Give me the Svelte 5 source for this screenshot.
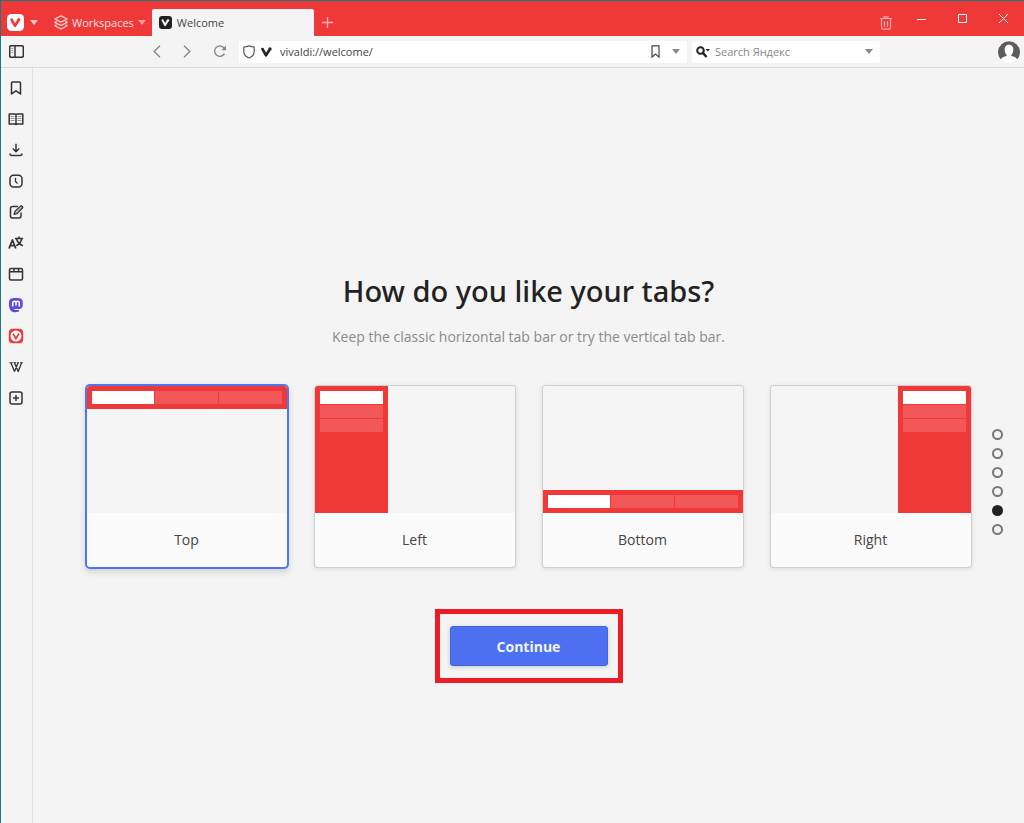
<script>
  let layouts = [
    { name: 'Top', side: 'top' },
    { name: 'Left', side: 'left' },
    { name: 'Bottom', side: 'bottom' },
    { name: 'Right', side: 'right' }
  ];

  let panels = ['Bookmarks', 'Reading List', 'Downloads', 'History', 'Notes', 'Translate', 'Window', 'Mastodon', 'Vivaldi', 'Wikipedia', 'Add Web Panel'];

  let steps = [1, 2, 3, 4, 5, 6];

  let selected = 'top';
  let current = 5;
  let address = 'vivaldi://welcome/';
  let search = '';
</script>

<div class="window">
  <header class="tabbar">
    <button class="menu" aria-label="Vivaldi menu">
      <svg width="17" height="17" viewBox="0 0 17 17">
        <rect width="17" height="17" rx="4.5" fill="#fff" />
        <path d="M4.6 5.6 8 11.9 11 7" fill="none" stroke="#ef3939" stroke-width="2.6" stroke-linecap="round" stroke-linejoin="round" />
        <circle cx="11.8" cy="5.7" r="1.6" fill="#ef3939" />
      </svg>
      <svg width="8" height="5" viewBox="0 0 8 5"><path d="M0 0h8L4 5z" fill="#fbc4c4" /></svg>
    </button>
    <button class="workspaces">
      <svg width="14" height="15" viewBox="0 0 14 15" fill="none" stroke="#fbd0d0" stroke-width="1.3" stroke-linejoin="round">
        <path d="M7 .8 13.2 4 7 7.2.8 4z" />
        <path d="M2.6 6.3.8 7.3 7 10.5l6.2-3.2-1.8-1" />
        <path d="M2.6 9.7.8 10.7 7 14l6.2-3.3-1.8-1" />
      </svg>
      <span>Workspaces</span>
      <svg width="8" height="5" viewBox="0 0 8 5"><path d="M0 0h8L4 5z" fill="#f69a9a" /></svg>
    </button>
    <button class="tab">
      <svg width="13" height="13" viewBox="0 0 17 17">
        <rect width="17" height="17" rx="4" fill="#222" />
        <path d="M4.6 5.6 8 11.9 11 7" fill="none" stroke="#fff" stroke-width="2.6" stroke-linecap="round" stroke-linejoin="round" />
        <circle cx="11.8" cy="5.7" r="1.6" fill="#fff" />
      </svg>
      <span>Welcome</span>
    </button>
    <button class="new-tab" aria-label="New tab">
      <svg width="11" height="11" viewBox="0 0 11 11" stroke="#fbb0b0" stroke-width="1.3"><path d="M5.5 0v11M0 5.5h11" /></svg>
    </button>
    <div class="controls">
      <button class="trash" aria-label="Closed tabs">
        <svg width="12" height="14" viewBox="0 0 12 14" fill="none" stroke="#f9a8a8" stroke-width="1.2">
          <path d="M0 2.5h12M4 2.3V.8h4v1.5M1.5 2.5v9q0 1.7 1.7 1.7h5.6q1.7 0 1.7-1.7v-9M4.5 5v6M7.500 5v6" />
        </svg>
      </button>
      <button aria-label="Minimize">
        <svg width="11" height="11" viewBox="0 0 11 11" stroke="#fff"><path d="M1 6.5h9" /></svg>
      </button>
      <button aria-label="Maximize">
        <svg width="11" height="11" viewBox="0 0 11 11" fill="none" stroke="#fff"><path d="M1.500 1.500h8v8h-8z" /></svg>
      </button>
      <button aria-label="Close">
        <svg width="11" height="11" viewBox="0 0 11 11" stroke="#fff"><path d="m1 1 9 9m0-9-9 9" /></svg>
      </button>
    </div>
  </header>

  <div class="toolbar">
    <button class="toggle" aria-label="Toggle panel">
      <svg width="15" height="13" viewBox="0 0 15 13" fill="none" stroke="#333" stroke-width="1.5">
        <rect x=".7" y=".7" width="13.6" height="11.6" rx="1.5" />
        <path d="M6 1v11" />
        <path d="M2.3 3.5h2M2.3 5.5h2M2.3 7.5h2" stroke="#999" stroke-width="1" />
      </svg>
    </button>
    <nav class="history">
      <button aria-label="Back">
        <svg width="8" height="13" viewBox="0 0 8 13" fill="none" stroke="#888" stroke-width="1.4"><path d="M7 .7 1.2 6.5 7 12.3" /></svg>
      </button>
      <button aria-label="Forward">
        <svg width="8" height="13" viewBox="0 0 8 13" fill="none" stroke="#888" stroke-width="1.4"><path d="m1 .7 5.8 5.8L1 12.3" /></svg>
      </button>
      <button aria-label="Reload">
        <svg width="14" height="13" viewBox="0 0 14 13" fill="none" stroke="#888" stroke-width="1.4">
          <path d="M11 3A5.2 5.2 0 1 0 11.4 8.7" />
          <path d="M13 .5v4.7H8.3z" fill="#888" stroke="none" />
        </svg>
      </button>
    </nav>
    <div class="field address">
      <svg width="12" height="14" viewBox="0 0 12 14" fill="none" stroke="#555" stroke-width="1.2">
        <path d="M6 .8Q8 2 11.2 2v4.5Q11.2 11 6 13 .8 11 .8 6.5V2Q4 2 6 .8z" />
      </svg>
      <svg width="11" height="10" viewBox="0 0 11 10">
        <path d="M1.5 2 5 8.3 8 3.5" fill="none" stroke="#222" stroke-width="2.6" stroke-linecap="round" stroke-linejoin="round" />
        <circle cx="9" cy="2" r="1.7" fill="#222" />
      </svg>
      <input type="text" aria-label="Address" bind:value={address}>
      <button aria-label="Bookmark page">
        <svg width="9" height="13" viewBox="0 0 9 13" fill="none" stroke="#444" stroke-width="1.2"><path d="M1 .8h7v11.3L4.5 9 1 12.1z" /></svg>
      </button>
      <button aria-label="Address history">
        <svg width="8" height="5" viewBox="0 0 8 5"><path d="M0 0h8L4 5z" fill="#888" /></svg>
      </button>
    </div>
    <div class="field search">
      <svg width="15" height="12" viewBox="0 0 15 12" fill="none" stroke="#222">
        <circle cx="4.5" cy="4.5" r="3.3" stroke-width="2" />
        <path d="m7 7 3.5 4" stroke-width="2.4" />
        <path d="M9.5 3H14l-2.2 2.6z" fill="#222" stroke="none" />
      </svg>
      <input type="text" aria-label="Search" placeholder="Search Яндекс" bind:value={search}>
      <button aria-label="Search engines">
        <svg width="8" height="5" viewBox="0 0 8 5"><path d="M0 0h8L4 5z" fill="#888" /></svg>
      </button>
    </div>
    <button class="profile" aria-label="Profile">
      <svg width="22" height="22" viewBox="0 0 22 22">
        <circle cx="11" cy="11" r="11" fill="#fff" />
        <path d="M2.5 18.2A11 11 0 1 1 19.5 18.2Q17 15.5 13.5 15h-5Q5 15.5 2.5 18.2z" fill="#5c5c5c" />
        <path d="M11 3.8c3 0 4.3 2.2 4.3 4.9 0 2.1-.8 4.1-2 5.2v2H8.7v-2c-1.2-1.1-2-3.1-2-5.2 0-2.7 1.3-4.9 4.3-4.9z" fill="#fff" />
      </svg>
    </button>
  </div>

  <div class="body">
    <aside class="panels">
      {#each panels as panel}
        <button aria-label={panel} title={panel}>
          <svg width="16" height="16" viewBox="0 0 16 16" fill="none" stroke="#333" stroke-width="1.5" stroke-linejoin="round">
            {#if panel === 'Bookmarks'}
              <path d="M3.5 3.2q0-1.2 1.2-1.2h6.6q1.2 0 1.2 1.2v10.7L8 10.9l-4.5 3z" />
            {:else if panel === 'Reading List'}
              <path d="M1.2 3h5.5L8 3.5 9.3 3h5.5v10H9.3l-1.3.5-1.3-.5H1.2zM8 3.5v10" />
              <path d="M2.5 5.5h4M2.5 7.5h4M2.5 9.5h4M9.5 5.5h4M9.5 7.5h4M9.5 9.5h4" stroke="#999" stroke-width="1" />
            {:else if panel === 'Downloads'}
              <path d="M8 1.8v7.5M4.8 6.5 8 9.7l3.2-3.2M2 11.5q0 2 2 2h8q2 0 2-2" />
            {:else if panel === 'History'}
              <rect x="2" y="2.3" width="12" height="11.8" rx="3.5" />
              <path d="M7.5 4.8v3.7l2 2" stroke-width="1.3" />
            {:else if panel === 'Notes'}
              <path d="M10 2.5H4.5q-2 0-2 2V12q0 2 2 2H11q2 0 2-2V8.5" />
              <path d="m6.2 10.3.7-2.9 5.6-5.3q.7-.7 1.4 0l.5.5q.7.7 0 1.4L9.1 9.6z" fill="#bbb" stroke-width="1.3" />
            {:else if panel === 'Translate'}
              <path d="m1 13.5 3.4-8.5 3.4 8.5M2.2 10.7h4.5" stroke-width="1.8" />
              <path d="M7 3.5h8.2M11 1.5v2M8.3 10.7Q12.9 8 13.7 3.8M8.5 4q1.5 4.7 6.3 6.7" stroke-width="1.6" />
            {:else if panel === 'Window'}
              <rect x="1.5" y="2.5" width="13" height="11.5" rx="1.5" />
              <path d="M1.5 5.7h13M6 2.5v3M10.5 2.5v3" />
            {:else if panel === 'Mastodon'}
              <path d="M14.8 5.2c0-2.5-1.700-3.800-3.300-4C9 .8 6.500.8 4.300 1.200 2.500 1.600 1 3 1 5.200c0 3.500 0 6.300 1.600 8.200 1.700 2 5.200 2.200 8.400 1v-1.700c-2.400.6-4.800.5-5.200-1 3.600.6 7 .5 8.200-1 .8-1 .8-3.500.8-5.500z" fill="#5b4be1" stroke="none" />
              <path d="M4.7 9.500V6q0-1.700 1.600-1.700T8 6v2V6q0-1.700 1.700-1.700T11.300 6v3.500" stroke="#fff" stroke-width="1.6" />
            {:else if panel === 'Vivaldi'}
              <rect x=".8" y=".8" width="14.4" height="14.4" rx="4" fill="#ef3939" stroke="none" />
              <circle cx="8" cy="8" r="5.5" fill="#fff" stroke="none" />
              <path d="m5.6 6.5 2.3 4.2 2.1-3.5" stroke="#ef3939" stroke-width="1.8" stroke-linecap="round" />
              <circle cx="10.4" cy="6.3" r="1" fill="#ef3939" stroke="none" />
            {:else if panel === 'Wikipedia'}
              <path d="m3 4 3.500 8.500M10 4l-3.500 8.500M6.500 4l3.700 8.500L13.500 4" stroke-width="1.3" />
              <path d="M1.500 3.700h3.300M5.500 3.700h2.700M9 3.700h2M12 3.700h2.800" stroke-width="1" />
            {:else}
              <rect x="2" y="2" width="12" height="12" rx="2" />
              <path d="M8 5v6M5 8h6" />
            {/if}
          </svg>
        </button>
      {/each}
    </aside>

    <main>
      <h1>How do you like your tabs?</h1>
      <p>Keep the classic horizontal tab bar or try the vertical tab bar.</p>

      <div class="choices">
        <div class="cards">
          {#each layouts as layout}
            <button class="card" class:selected={selected === layout.side} aria-pressed={selected === layout.side} on:click={() => (selected = layout.side)}>
              <span class="preview {layout.side}">
                <span class="strip">
                  <i class="active"></i>
                  <i></i>
                  <i></i>
                </span>
              </span>
              <span class="name">{layout.name}</span>
            </button>
          {/each}
        </div>
        <nav class="steps">
          {#each steps as step}
            <button class:current={current === step} aria-label="Step {step}" on:click={() => (current = step)}></button>
          {/each}
        </nav>
      </div>

      <div class="highlight">
        <button class="continue">Continue</button>
      </div>
    </main>
  </div>
</div>

<style>
  :global(body) {
    background: #f4f4f4;
  }

  .window {
    display: flex;
    flex-direction: column;
    box-sizing: border-box;
    min-height: 100vh;
    border-top: 1px solid #1b7a80;
    border-left: 1px solid #1b7a80;
    background: #f4f4f4;
    color: #444;
    font-family: "Open Sans", "Noto Sans", sans-serif;
    font-size: 11px;
  }

  button {
    display: flex;
    align-items: center;
    justify-content: center;
    margin: 0;
    padding: 0;
    border: 0;
    background: none;
    color: inherit;
    font: inherit;
  }

  svg {
    display: block;
    flex: none;
  }

  .tabbar {
    display: flex;
    align-items: stretch;
    height: 35px;
    background: #ef3939;
  }

  .menu {
    gap: 6px;
    padding: 8px 0 0 6px;
  }

  .workspaces {
    gap: 4px;
    padding: 8px 6px 0 16px;
    color: #fde0e0;
    font-weight: 500;
  }

  .tab {
    flex: 0 1 162px;
    justify-content: flex-start;
    gap: 5px;
    margin-top: 8px;
    padding-left: 7px;
    border-radius: 2px 2px 0 0;
    background: #f4f4f4;
  }

  .new-tab {
    padding: 8px 8px 0;
  }

  .controls {
    display: flex;
    margin-left: auto;
  }

  .controls button {
    width: 41px;
  }

  .controls .trash {
    width: 30px;
    padding-top: 8px;
  }

  .toolbar {
    display: flex;
    align-items: center;
    height: 31px;
    padding: 0 4px 0 8px;
    border-bottom: 1px solid #dcdcdc;
  }

  .history {
    display: flex;
    gap: 22px;
    margin: 0 12px 0 129px;
  }

  .field {
    display: flex;
    align-items: center;
    box-sizing: border-box;
    height: 22px;
    border-radius: 2px;
    background: #fff;
  }

  .address {
    flex: 1;
    gap: 6px;
    padding: 0 7px 0 4px;
  }

  .address button {
    margin-left: 6px;
  }

  .search {
    flex: 0 1 188px;
    gap: 2px;
    margin: 0 118px 0 5px;
    padding: 0 7px 0 4px;
  }

  input {
    flex: 1;
    min-width: 0;
    padding: 0 2px;
    border: 0;
    outline: 0;
    background: none;
    color: #444;
    font: inherit;
  }

  input::placeholder {
    color: #888;
    opacity: 1;
  }

  .body {
    display: flex;
    flex: 1;
  }

  .panels {
    display: flex;
    flex-direction: column;
    flex: 0 0 auto;
    gap: 15px;
    width: 30px;
    padding: 12px 1px 0 0;
    border-right: 1px solid #e2e2e2;
  }

  main {
    display: flex;
    flex: 1;
    flex-direction: column;
    align-items: center;
    min-width: 0;
    padding: 201px 0 40px;
  }

  h1 {
    margin: 0;
    color: #222;
    font-family: "Noto Sans", "Open Sans", sans-serif;
    font-size: 29px;
    font-weight: 500;
    line-height: 44px;
  }

  p {
    margin: 14px 0 39px;
    color: #8a8a8a;
    font-size: 14px;
    line-height: 20px;
  }

  .choices {
    display: grid;
    grid-template-columns: 1fr minmax(0, 884px) 1fr;
    width: 100%;
  }

  .cards {
    display: grid;
    grid-column: 2;
    grid-template-columns: repeat(4, 1fr);
    gap: 28px;
  }

  .card {
    flex-direction: column;
    align-items: stretch;
    overflow: hidden;
    border-radius: 3px;
    background: #fbfbfb;
    box-shadow: 0 0 0 1px #d0d0d0, 0 1px 4px 1px #dcdcdc;
  }

  .card.selected {
    box-shadow: 0 0 0 2px #4f75f0, 0 3px 6px 2px #d0d0d0;
  }

  .preview {
    display: flex;
    height: 127px;
    background: #f5f5f5;
  }

  .strip {
    display: flex;
    box-sizing: border-box;
    gap: 1px;
    padding: 5px;
    background: #ef3939;
  }

  .strip i {
    flex: 1;
    height: 13px;
    background: #f25858;
  }

  .strip .active {
    background: #fff;
  }

  .top .strip,
  .bottom .strip {
    width: 100%;
    height: 23px;
  }

  .bottom {
    align-items: flex-end;
  }

  .right {
    justify-content: flex-end;
  }

  .left .strip,
  .right .strip {
    flex-direction: column;
    width: 73px;
  }

  .left i,
  .right i {
    flex: none;
  }

  .name {
    font-size: 14px;
    line-height: 54px;
  }

  .steps {
    display: flex;
    flex-direction: column;
    align-self: center;
    justify-self: end;
    gap: 8px;
    padding: 11px 21px 0 0;
  }

  .steps button {
    box-sizing: border-box;
    width: 11px;
    height: 11px;
    border: 2px solid #777;
    border-radius: 50%;
  }

  .steps .current {
    border-color: #222;
    background: #222;
  }

  .highlight {
    margin-top: 42px;
    padding: 12px 10px;
    border: 5px solid #ed1c24;
  }

  .continue {
    box-sizing: border-box;
    width: 158px;
    height: 40px;
    border: 1px solid #3f66d8;
    border-radius: 3px;
    background: #4c70f0;
    box-shadow: 0 1px 4px #c8c8c8;
    color: #f2f5ff;
    font-size: 14px;
    font-weight: 700;
  }
</style>
